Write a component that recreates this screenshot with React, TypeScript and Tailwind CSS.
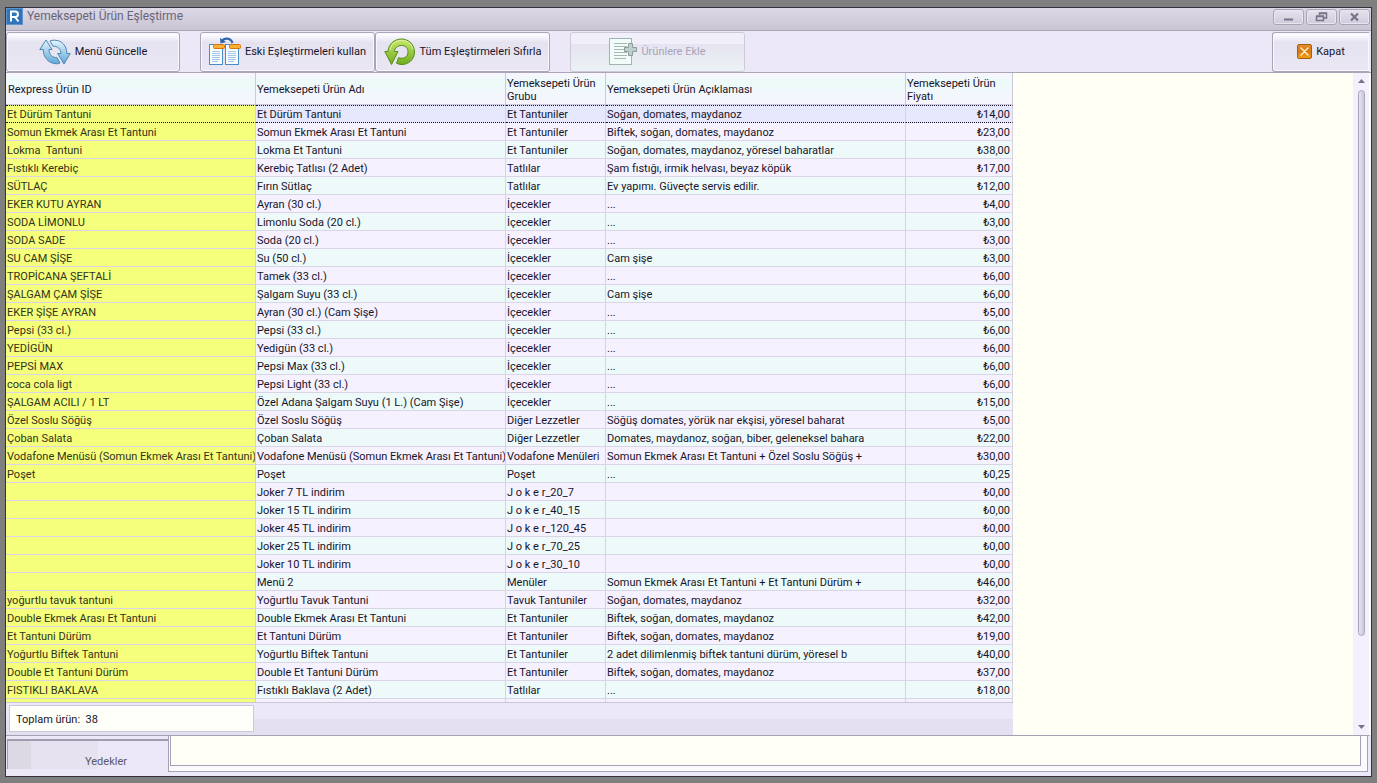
import React from "react";

type Row = [string, string, string, string, string];

const rows: Row[] = [
  ["Et Dürüm Tantuni", "Et Dürüm Tantuni", "Et Tantuniler", "Soğan, domates, maydanoz", "₺14,00"],
  ["Somun Ekmek Arası Et Tantuni", "Somun Ekmek Arası Et Tantuni", "Et Tantuniler", "Biftek, soğan, domates, maydanoz", "₺23,00"],
  ["Lokma  Tantuni", "Lokma Et Tantuni", "Et Tantuniler", "Soğan, domates, maydanoz, yöresel baharatlar", "₺38,00"],
  ["Fıstıklı Kerebiç", "Kerebiç Tatlısı (2 Adet)", "Tatlılar", "Şam fıstığı, irmik helvası, beyaz köpük", "₺17,00"],
  ["SÜTLAÇ", "Fırın Sütlaç", "Tatlılar", "Ev yapımı. Güveçte servis edilir.", "₺12,00"],
  ["EKER KUTU AYRAN", "Ayran (30 cl.)", "İçecekler", "...", "₺4,00"],
  ["SODA LİMONLU", "Limonlu Soda (20 cl.)", "İçecekler", "...", "₺3,00"],
  ["SODA SADE", "Soda (20 cl.)", "İçecekler", "...", "₺3,00"],
  ["SU CAM ŞİŞE", "Su (50 cl.)", "İçecekler", "Cam şişe", "₺3,00"],
  ["TROPİCANA ŞEFTALİ", "Tamek (33 cl.)", "İçecekler", "...", "₺6,00"],
  ["ŞALGAM ÇAM ŞİŞE", "Şalgam Suyu (33 cl.)", "İçecekler", "Cam şişe", "₺6,00"],
  ["EKER ŞİŞE AYRAN", "Ayran (30 cl.) (Cam Şişe)", "İçecekler", "...", "₺5,00"],
  ["Pepsi (33 cl.)", "Pepsi (33 cl.)", "İçecekler", "...", "₺6,00"],
  ["YEDİGÜN", "Yedigün (33 cl.)", "İçecekler", "...", "₺6,00"],
  ["PEPSİ MAX", "Pepsi Max (33 cl.)", "İçecekler", "...", "₺6,00"],
  ["coca cola ligt", "Pepsi Light (33 cl.)", "İçecekler", "...", "₺6,00"],
  ["ŞALGAM ACILI / 1 LT", "Özel Adana Şalgam Suyu (1 L.) (Cam Şişe)", "İçecekler", "...", "₺15,00"],
  ["Özel Soslu Söğüş", "Özel Soslu Söğüş", "Diğer Lezzetler", "Söğüş domates, yörük nar ekşisi, yöresel baharat", "₺5,00"],
  ["Çoban Salata", "Çoban Salata", "Diğer Lezzetler", "Domates, maydanoz, soğan, biber, geleneksel bahara", "₺22,00"],
  ["Vodafone Menüsü (Somun Ekmek Arası Et Tantuni)", "Vodafone Menüsü (Somun Ekmek Arası Et Tantuni)", "Vodafone Menüleri", "Somun Ekmek Arası Et Tantuni + Özel Soslu Söğüş +", "₺30,00"],
  ["Poşet", "Poşet", "Poşet", "...", "₺0,25"],
  ["", "Joker 7 TL indirim", "J o k e r_20_7", "", "₺0,00"],
  ["", "Joker 15 TL indirim", "J o k e r_40_15", "", "₺0,00"],
  ["", "Joker 45 TL indirim", "J o k e r_120_45", "", "₺0,00"],
  ["", "Joker 25 TL indirim", "J o k e r_70_25", "", "₺0,00"],
  ["", "Joker 10 TL indirim", "J o k e r_30_10", "", "₺0,00"],
  ["", "Menü 2", "Menüler", "Somun Ekmek Arası Et Tantuni + Et Tantuni Dürüm +", "₺46,00"],
  ["yoğurtlu tavuk tantuni", "Yoğurtlu Tavuk Tantuni", "Tavuk Tantuniler", "Soğan, domates, maydanoz", "₺32,00"],
  ["Double Ekmek Arası Et Tantuni", "Double Ekmek Arası Et Tantuni", "Et Tantuniler", "Biftek, soğan, domates, maydanoz", "₺42,00"],
  ["Et Tantuni Dürüm", "Et Tantuni Dürüm", "Et Tantuniler", "Biftek, soğan, domates, maydanoz", "₺19,00"],
  ["Yoğurtlu Biftek Tantuni", "Yoğurtlu Biftek Tantuni", "Et Tantuniler", "2 adet dilimlenmiş biftek tantuni dürüm, yöresel b", "₺40,00"],
  ["Double Et Tantuni Dürüm", "Double Et Tantuni Dürüm", "Et Tantuniler", "Biftek, soğan, domates, maydanoz", "₺37,00"],
  ["FISTIKLI BAKLAVA", "Fıstıklı Baklava (2 Adet)", "Tatlılar", "...", "₺18,00"],
  ["", "", "", "", ""],
];

const headers = [
  "Rexpress Ürün ID",
  "Yemeksepeti Ürün Adı",
  "Yemeksepeti Ürün Grubu",
  "Yemeksepeti Ürün Açıklaması",
  "Yemeksepeti Ürün Fiyatı",
];

function RefreshIcon() {
  return (
    <svg width="32" height="26" viewBox="0 0 32 26" aria-hidden="true">
      <defs>
        <linearGradient id="blue" x1="0" y1="0" x2="0" y2="1">
          <stop offset="0" stopColor="#e4f5fc" />
          <stop offset="1" stopColor="#5fa8d6" />
        </linearGradient>
      </defs>
      <g fill="url(#blue)" stroke="#4b87b3" strokeWidth="1" strokeLinejoin="round">
        <path d="M7 1 L0.8 10.5 H4.2 C4.2 18 9 24.5 17.5 24.8 C19 24.8 20.2 24.4 21 24 L18 18.6 C13.5 19 10 15.5 10 10.5 H13 Z" />
        <path d="M25 25 L31.2 14.5 H27.8 C27.8 7 23 1.2 15.5 1.2 C13.6 1.2 12 1.6 11 2 L14 7.2 C18.5 7 22 10 22 14.5 H18.6 Z" />
      </g>
    </svg>
  );
}

function RestoreMatchesIcon() {
  return (
    <svg width="32" height="29" viewBox="0 0 32 29" aria-hidden="true">
      {[0, 16].map((x) => (
        <g key={x}>
          <rect x={x + 0.5} y="7.5" width="13" height="20" fill="#f7fcff" stroke="#4a8cc4" />
          <path
            d={`M${x + 3} 14.5h8 M${x + 3} 16.5h8 M${x + 3} 18.5h8 M${x + 3} 20.5h8 M${x + 3} 22.5h8 M${x + 3} 24.5h6`}
            stroke="#a3c6e6"
            strokeWidth="1"
          />
          <rect x={x + 4.5} y="7.5" width="11" height="4" rx="1" fill="#fbb034" stroke="#d27810" />
        </g>
      ))}
      <path d="M13 4.500 C15 0.500 21.500 0.500 23.500 6" fill="none" stroke="#2c65ab" strokeWidth="2.2" />
      <path d="M11 1 L11.500 6.500 L17 5 Z" fill="#2c65ab" />
    </svg>
  );
}

function ResetIcon() {
  return (
    <svg width="32" height="28" viewBox="0 0 32 28" aria-hidden="true">
      <defs>
        <linearGradient id="green" x1="0" y1="0" x2="0" y2="1">
          <stop offset="0" stopColor="#c9e86a" />
          <stop offset="1" stopColor="#70ad1f" />
        </linearGradient>
      </defs>
      <path
        d="M4 13.500 C4.500 6 10.500 1 17.500 1 C25 1 30.500 6.800 30.500 14 C30.500 21.500 24.500 26.500 18 26.500 C16 26.500 14 26 12.500 25.200 L14.500 19.600 C18.500 21.500 24 19.500 24 14 C24 10 21.500 7.500 17.500 7.500 C13.500 7.500 10.800 10 10.300 13.500 H14 L7.500 26.500 L0.800 13.500 Z"
        fill="url(#green)"
        stroke="#568d1b"
        strokeLinejoin="round"
      />
      <path d="M6 12.500 C7 6 12 2.500 17.500 2.500 C23 2.500 27.500 6 28.800 11" fill="none" stroke="#e3f4a6" strokeWidth="1" />
    </svg>
  );
}

function AddDocumentIcon() {
  return (
    <svg width="28" height="28" viewBox="0 0 28 28" aria-hidden="true">
      <rect x="0.500" y="0.500" width="22" height="26" fill="#f1fbf7" stroke="#a3b3b3" />
      <path
        d="M5 5.500h13 M5 8.500h13 M5 11.500h11 M5 14.500h13 M5 17.500h13 M5 20.500h12"
        stroke="#a9b7b5"
        strokeWidth="1"
      />
      <path
        d="M19.500 5.500h4v4h4v4h-4v4h-4v-4h-4v-4h4z"
        fill="#bfcfc9"
        stroke="#8d9c9a"
        strokeLinejoin="round"
      />
    </svg>
  );
}

function CloseBoxIcon() {
  return (
    <svg width="15" height="15" viewBox="0 0 15 15" aria-hidden="true">
      <defs>
        <linearGradient id="amber" x1="0" y1="0" x2="0" y2="1">
          <stop offset="0" stopColor="#e58d2c" />
          <stop offset="0.500" stopColor="#d57b14" />
          <stop offset="1" stopColor="#f5a31c" />
        </linearGradient>
      </defs>
      <rect x="0.500" y="0.500" width="14" height="14" rx="1.500" fill="url(#amber)" stroke="#a95d10" />
      <path d="M4 4l7 7M11 4l-7 7" stroke="#fff2c8" strokeWidth="1.400" strokeLinecap="round" />
    </svg>
  );
}

function ToolButton({
  icon,
  label,
  className,
  disabled,
}: {
  icon: React.ReactNode;
  label: string;
  className: string;
  disabled?: boolean;
}) {
  return (
    <button
      type="button"
      disabled={disabled}
      className={`flex h-10 items-center justify-center gap-1 border ${
        disabled
          ? "rounded-[3px] border-[#cfcadb] bg-linear-to-b from-[#f0effa] from-30% via-[#e6e3f0] via-30% to-[#ebf3f5] text-[#a9a5b6]"
          : "border-[#aaa5b8] bg-linear-to-b from-[#fbfaff] from-5% via-[#e6e3f1] via-25% to-[#eae6f3] text-[#17142b] shadow-[inset_0_0_0_1px_#faf8ff]"
      } ${className}`}
    >
      {icon}
      <span>{label}</span>
    </button>
  );
}

function CaptionButton({ label, children }: { label: string; children: React.ReactNode }) {
  return (
    <button
      type="button"
      aria-label={label}
      className="flex h-4 w-[31px] items-center justify-center rounded-[3px] border border-[#a9a5b6] bg-linear-to-b from-[#e6e3ee] to-[#cfcbdb] shadow-[inset_0_0_0_1px_#e9e6f1]"
    >
      <svg width="13" height="12" viewBox="0 0 13 12" fill="none" stroke="#777389" aria-hidden="true">
        {children}
      </svg>
    </button>
  );
}

export default function App() {
  return (
    <div className="h-screen bg-[#7f7f7f] px-[5px] pt-[7px] pb-[6px] font-[Roboto,'DejaVu_Sans_Condensed',sans-serif] text-[11px] leading-[13px] text-[#17142b]">
      <div className="flex h-full flex-col border border-[#34313f] bg-[#ece8f8]">
        <header className="flex h-[23px] shrink-0 items-start border-b border-[#aaa5b6] bg-linear-to-b from-[#dcd8e6] to-[#c9c5d3]">
          <svg width="17" height="17" viewBox="0 0 17 17" aria-hidden="true">
            <rect x="0.500" y="0.500" width="16" height="16" fill="#2f74bb" stroke="#5f94cb" />
            <path d="M5 13.500V3.500h4.200a2.700 2.700 0 0 1 0 5.500H5M9 9l3.500 4.500" fill="none" stroke="#fff" strokeWidth="2" />
          </svg>
          <h1 className="ml-1 flex-1 text-[12px] leading-4 font-normal text-[#696578]">Yemeksepeti Ürün Eşleştirme</h1>
          <div className="flex gap-[2px] pt-px pr-px">
            <CaptionButton label="Simge durumuna küçült">
              <path d="M2 8.500h9" strokeWidth="2" />
            </CaptionButton>
            <CaptionButton label="Önceki boyut">
              <path d="M4.500 4V2H11.500V7H9M4 2.500h8" strokeWidth="1.500" />
              <path d="M1.500 5.500h7v4h-7zM1 5h8" strokeWidth="1.500" />
            </CaptionButton>
            <CaptionButton label="Pencereyi kapat">
              <path d="M3 2.500l7 7M10 2.500l-7 7" strokeWidth="2.200" />
            </CaptionButton>
          </div>
        </header>

        <div className="flex h-[42px] shrink-0 items-center border-b border-[#aaa6b8] pr-[2px]">
          <ToolButton icon={<RefreshIcon />} label="Menü Güncelle" className="w-[174px] rounded-[3px]" />
          <ToolButton
            icon={<RestoreMatchesIcon />}
            label="Eski Eşleştirmeleri kullan"
            className="ml-5 w-[175px] rounded-[3px]"
          />
          <ToolButton icon={<ResetIcon />} label="Tüm Eşleştirmeleri Sıfırla" className="w-[175px] rounded-[3px]" />
          <ToolButton icon={<AddDocumentIcon />} label="Ürünlere Ekle" className="ml-5 w-[175px]" disabled />
          <ToolButton
            icon={<CloseBoxIcon />}
            label="Kapat"
            className="ml-auto w-[97px] rounded-l-[3px] border-r-0"
          />
        </div>

        <main className="flex min-h-0 flex-1 border-r-2 border-b border-r-[#fdfcf4] border-b-[#a5a1b5] bg-[#fffff6]">
          <section className="flex w-[1007px] shrink-0 flex-col">
            <div className="min-h-0 flex-1 overflow-hidden border-b border-[#cac6d8]">
              <table className="w-full table-fixed border-separate border-spacing-0">
                <colgroup>
                  <col className="w-[250px]" />
                  <col className="w-[250px]" />
                  <col className="w-[100px]" />
                  <col className="w-[300px]" />
                  <col className="w-[107px]" />
                </colgroup>
                <thead>
                  <tr className="h-8">
                    {headers.map((title) => (
                      <th
                        key={title}
                        scope="col"
                        className="border-r border-b border-[#cdc9da] bg-linear-to-b from-[#f8f5ff] via-[#ecfaf8] via-30% to-[#f7f4ff] p-0 pt-[2px] pl-px text-left align-middle font-normal first:pl-[2px]"
                      >
                        {title}
                      </th>
                    ))}
                  </tr>
                </thead>
                <tbody>
                  {rows.map((row, r) => {
                    const selected = r === 0;
                    const tone = selected ? "bg-[#e6e8fd]" : r % 2 ? "bg-[#f5f1fe]" : "bg-[#edfaf9]";
                    const edge = selected
                      ? "border-y border-y-[#17142b] [border-top-style:dotted] [border-bottom-style:dotted]"
                      : "border-b border-b-[#dad5e6] pt-px";
                    return (
                      <tr key={r} className="h-[18px]">
                        {row.map((cell, c) => (
                          <td
                            key={c}
                            className={`overflow-hidden border-r border-r-[#d6d2e2] pr-[2px] pl-px whitespace-pre ${edge} ${
                              c === 0 ? "bg-[#f5ff7b] text-[#33321c]" : tone
                            } ${c === 4 ? "text-right" : ""}`}
                          >
                            {cell}
                          </td>
                        ))}
                      </tr>
                    );
                  })}
                </tbody>
              </table>
            </div>
            <footer className="h-8 shrink-0 bg-linear-to-b from-[#ece8f8] from-50% to-[#e4e0ef] to-50% px-[3px] pt-[2px]">
              <div className="flex h-[27px] w-[245px] items-center border border-[#cbc7dc] bg-[#fffff9] pt-px pl-[6px] whitespace-pre">
                Toplam ürün:  38
              </div>
            </footer>
          </section>
          <div className="flex-1" />
          <div className="flex w-4 shrink-0 flex-col items-center bg-[#f4f0fe] py-[6px]">
            <svg width="7" height="4" viewBox="0 0 7 4" aria-hidden="true">
              <path d="M0 4L3.500 0L7 4z" fill="#777389" />
            </svg>
            <div className="mt-[7px] h-[546px] w-[7px] rounded-full border border-[#aaa6ba] bg-linear-to-r from-[#e6e3ef] to-[#cbc7da]" />
            <svg className="mt-auto" width="7" height="4" viewBox="0 0 7 4" aria-hidden="true">
              <path d="M0 0h7L3.500 4z" fill="#777389" />
            </svg>
          </div>
        </main>

        <div className="flex h-10 shrink-0 pr-[3px] pl-px">
          <div className="w-[161px] pt-[3px]">
            <button
              type="button"
              className="h-[30px] w-full border-t-2 border-l border-[#a19cb0] bg-[linear-gradient(to_right,#dcd9e5_23px,#e6e2ef_23px,#e6e2ef_90px,#ece8f8_90px)] pt-3 pl-9 text-[#5b576b]"
            >
              Yedekler
            </button>
          </div>
          <div className="mb-1 flex-1 border-x border-b border-[#a5a1b5] bg-[#fbfaff] pr-[6px] pb-[5px] pl-px">
            <div className="h-full border-x border-b border-[#a5a1b5] bg-[#fffff8]" />
          </div>
        </div>
      </div>
    </div>
  );
}
